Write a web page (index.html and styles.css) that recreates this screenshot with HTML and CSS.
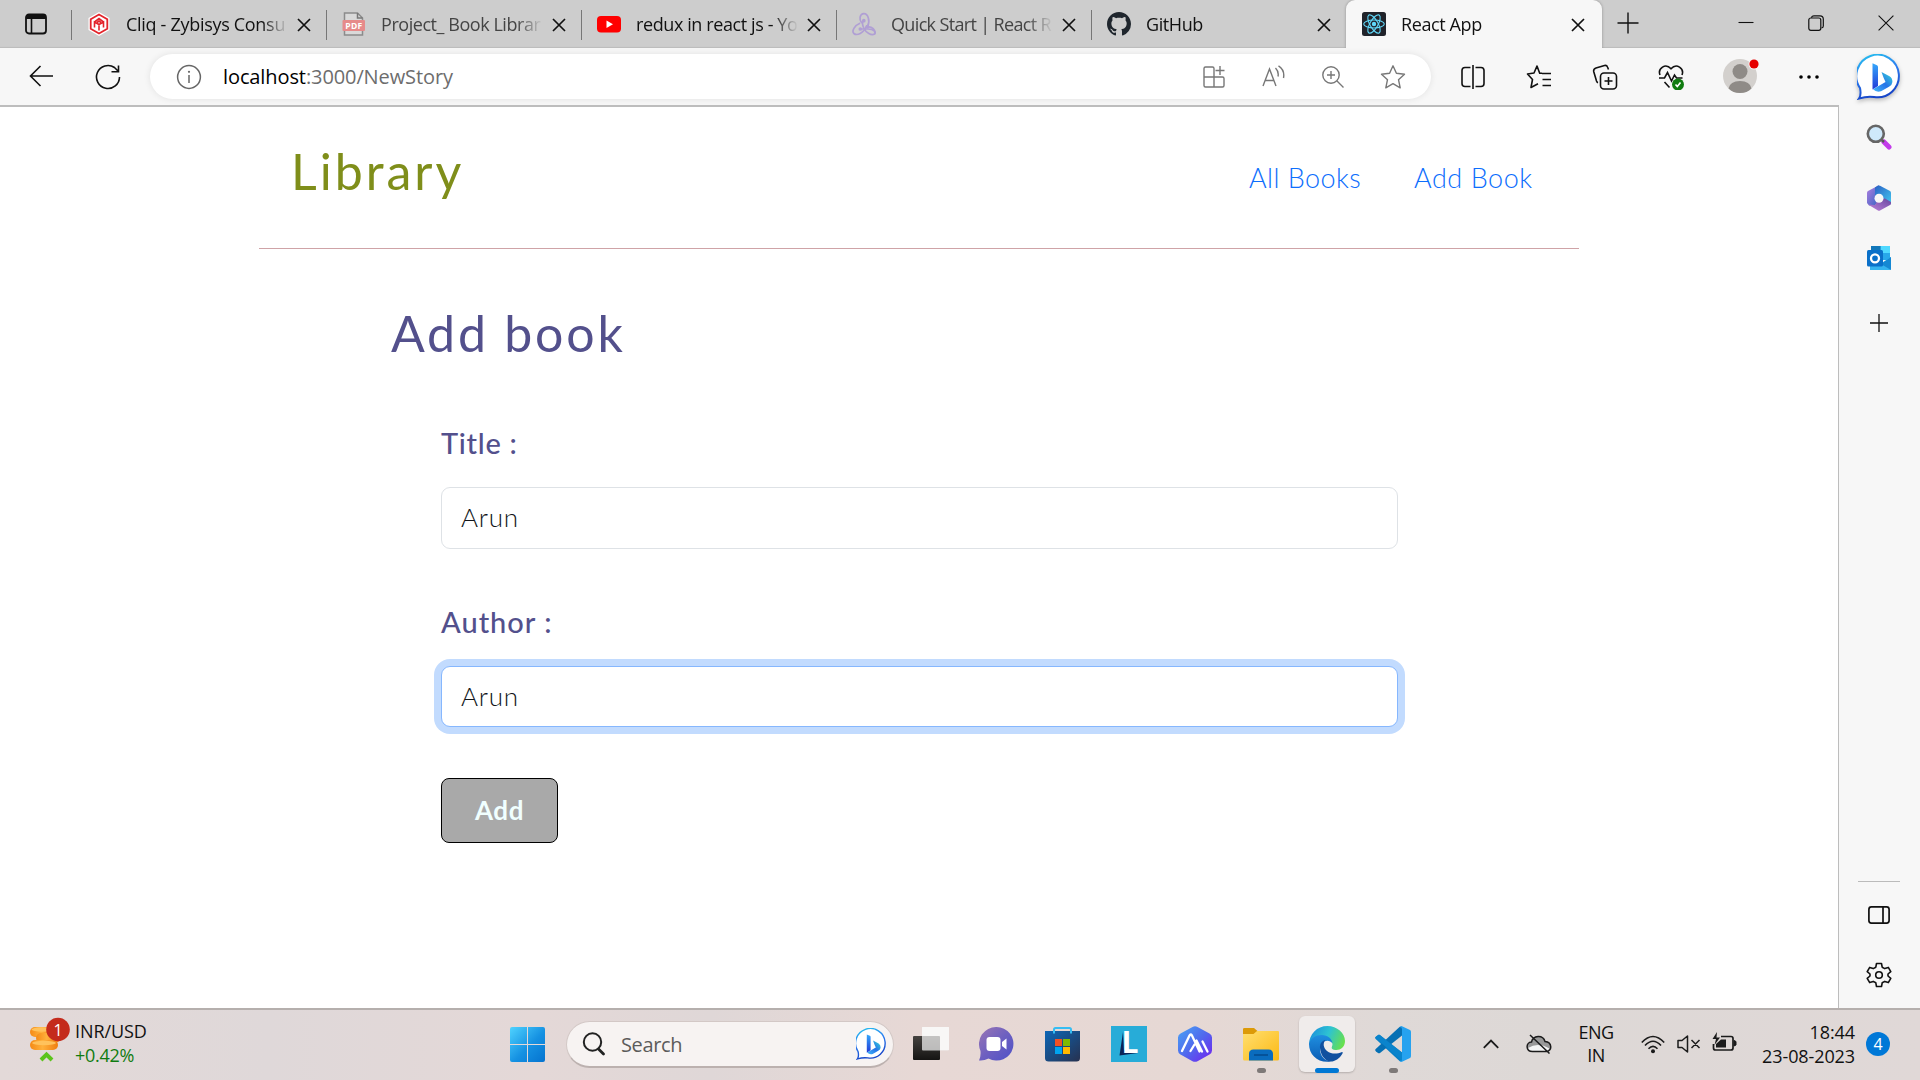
FILE: index.html
```html
<!DOCTYPE html>
<html lang="en">
<head>
<meta charset="utf-8">
<title>React App</title>
<link rel="stylesheet" href="styles.css">
</head>
<body>
<svg class="defs" width="0" height="0" aria-hidden="true">
  <defs>
    <linearGradient id="bingRing" x1="0" y1="0" x2="0.3" y2="1"><stop offset="0" stop-color="#26c6ee"/><stop offset=".5" stop-color="#2b7cf0"/><stop offset="1" stop-color="#1746c9"/></linearGradient>
    <linearGradient id="bingStem" x1="0" y1="0" x2="0" y2="1"><stop offset="0" stop-color="#35a8fb"/><stop offset="1" stop-color="#2139d8"/></linearGradient>
    <linearGradient id="bingBowl" x1="1" y1="0" x2="0" y2="1"><stop offset="0" stop-color="#35dcd8"/><stop offset=".5" stop-color="#2774e8"/><stop offset="1" stop-color="#41b8fb"/></linearGradient>
    <linearGradient id="winBlue" x1="0" y1="0" x2="1" y2="1"><stop offset="0" stop-color="#4fd3ff"/><stop offset=".55" stop-color="#1591e2"/><stop offset="1" stop-color="#0573cf"/></linearGradient>
    <linearGradient id="chatFill" x1="0" y1="0" x2="1" y2="1"><stop offset="0" stop-color="#9a76b4"/><stop offset=".5" stop-color="#6e60c0"/><stop offset="1" stop-color="#4d50c8"/></linearGradient>
    <linearGradient id="storeFill" x1="0" y1="0" x2="1" y2="1"><stop offset="0" stop-color="#0c66b6"/><stop offset="1" stop-color="#27314f"/></linearGradient>
    <linearGradient id="hexFill" x1="0" y1="0" x2="1" y2="1"><stop offset="0" stop-color="#4aa5f5"/><stop offset=".5" stop-color="#5069ed"/><stop offset="1" stop-color="#7420f0"/></linearGradient>
    <linearGradient id="folderFill" x1="0" y1="0" x2="1" y2="1"><stop offset="0" stop-color="#ffdf70"/><stop offset="1" stop-color="#fcb914"/></linearGradient>
    <linearGradient id="edgeTop" x1="0" y1=".3" x2="1" y2=".6"><stop offset="0" stop-color="#1a90dc"/><stop offset=".5" stop-color="#2ec3d2"/><stop offset="1" stop-color="#68e04c"/></linearGradient>
    <linearGradient id="edgeSide" x1="0" y1="0" x2="0" y2="1"><stop offset="0" stop-color="#1f8fe0"/><stop offset="1" stop-color="#0b5cb4"/></linearGradient>
    <linearGradient id="darkPane" x1="0" y1="0" x2="0" y2="1"><stop offset="0" stop-color="#45423f"/><stop offset="1" stop-color="#151413"/></linearGradient>
    <linearGradient id="coin" x1="0" y1="0" x2="1" y2="0"><stop offset="0" stop-color="#f58a16"/><stop offset=".45" stop-color="#ffb13c"/><stop offset="1" stop-color="#ef7d10"/></linearGradient>
    <linearGradient id="officeA" x1="0" y1="0" x2="1" y2="1"><stop offset="0" stop-color="#b37fe0"/><stop offset="1" stop-color="#3464c4"/></linearGradient>
    <linearGradient id="officeB" x1="0" y1="0" x2="1" y2="1"><stop offset="0" stop-color="#2a61c5"/><stop offset="1" stop-color="#43c5ee"/></linearGradient>
    <linearGradient id="officeC" x1="0" y1="1" x2="1" y2="0"><stop offset="0" stop-color="#bf82da"/><stop offset="1" stop-color="#66479f"/></linearGradient>
    <symbol id="close" viewBox="0 0 14 14"><path d="M1 1 13 13M13 1 1 13" stroke="#111" stroke-width="1.7" fill="none"/></symbol>
    <symbol id="bing" viewBox="0 0 46 46">
      <path d="M2 44.500Q4.500 41 3 34A21.300 21.300 0 1 1 17 43Q10 42 2 44.500Z" fill="#fff" stroke="url(#bingRing)" stroke-width="2"/>
      <path d="M15.500 9.200 20 11.300Q21 11.800 21 13V32L15.500 35.500Z" fill="url(#bingStem)"/>
      <path d="M24.500 18 32.500 22.200Q35.500 24 35.400 28 35.200 31 32 32.800L24 37.200Q19.500 38.800 16 35.200L28.500 28 26.500 23.600Z" fill="url(#bingBowl)"/>
    </symbol>
  </defs>
</svg>

<div class="screen">
  <header class="tabstrip">
    <div class="workspaces">
      <svg width="22" height="22" viewBox="0 0 22 22"><rect x="1" y="1.500" width="20" height="19" rx="3" fill="none" stroke="#111" stroke-width="1.800"/><path d="M1 6V4Q1 1 4 1H18Q21 1 21 4V6Z" fill="#111"/><path d="M6.500 6V20" stroke="#111" stroke-width="1.600"/></svg>
    </div>
    <div class="tab">
      <svg class="favicon" width="24" height="24" viewBox="0 0 24 24"><path d="M12 0 22.500 6V18L12 24 1.500 18V6Z" fill="#fff"/><path d="M12 2.500 20.300 7.200V16.800L12 21.500 3.700 16.800V7.200Z" fill="#fff" stroke="#e3242b" stroke-width="1.800"/><path d="M7.500 15.500V10L12 12.500 16.500 10V15.500M12 12.500V18.500M7.500 10 12 6.500 16.500 10M10 10.500 12 9 14 10.500" fill="none" stroke="#e3242b" stroke-width="1.600"/></svg>
      <span class="tab-title t-cliq">Cliq - Zybisys Consu</span>
      <svg class="tab-close" width="14" height="14"><use href="#close"/></svg>
    </div>
    <div class="tab">
      <svg class="favicon" width="24" height="24" viewBox="0 0 24 24"><path d="M2.500 1H15.500L20.500 6V23H2.500Z" fill="#d9d9d9" stroke="#8b8b8b" stroke-width="1.500"/><path d="M15.500 1V6H20.500" fill="none" stroke="#777" stroke-width="1.500"/><rect x=".5" y="8" width="22.500" height="11" rx="1" fill="#e68a8a"/><text x="11.700" y="16.800" font-size="8.500" font-weight="700" text-anchor="middle" fill="#fff" textLength="17">PDF</text></svg>
      <span class="tab-title t-pdf dim">Project_ Book Librar</span>
      <svg class="tab-close" width="14" height="14"><use href="#close"/></svg>
    </div>
    <div class="tab">
      <svg class="favicon" width="24" height="24" viewBox="0 0 24 24"><rect x="0" y="4" width="24" height="16.500" rx="4" fill="#f00"/><path d="M9.500 8.500V16L16 12.200Z" fill="#fff"/></svg>
      <span class="tab-title t-yt">redux in react js - Yo</span>
      <svg class="tab-close" width="14" height="14"><use href="#close"/></svg>
    </div>
    <div class="tab">
      <svg class="favicon" width="24" height="24" viewBox="0 0 24 24" fill="none" stroke="#b09fd4" stroke-width="1.700" stroke-linecap="round"><path d="M15.500 14.500C18.500 9 16 1.500 11.800 1.700 7.500 2 7 7.500 9.500 10.500"/><path d="M8.500 17H16C22 17 24.500 20.500 22.500 22 19.500 24 14 21 11.500 15.500 10 12 10.500 10 11.500 9"/><path d="M7.500 11.500C2.500 13.500-.5 19 1.800 21.500 5 24 11.500 21.500 14.500 14"/><path d="M15 15C20 14 24 18 22.500 22"/><circle cx="11.800" cy="8.700" r="1" fill="#b09fd4"/><circle cx="15.500" cy="14.700" r="1" fill="#b09fd4"/><circle cx="8.300" cy="17" r="1" fill="#b09fd4"/></svg>
      <span class="tab-title t-redux dim">Quick Start | React R</span>
      <svg class="tab-close" width="14" height="14"><use href="#close"/></svg>
    </div>
    <div class="tab">
      <svg class="favicon" width="24" height="24" viewBox="0 0 16 16"><path fill="#1f262d" d="M8 0C3.580 0 0 3.580 0 8c0 3.540 2.290 6.530 5.470 7.590.4.070.55-.17.55-.38 0-.19-.01-.82-.01-1.490-2.010.37-2.530-.49-2.690-.94-.09-.23-.48-.94-.82-1.130-.28-.15-.68-.52-.01-.53.63-.01 1.080.58 1.230.82.72 1.210 1.870.87 2.330.66.070-.52.28-.87.51-1.070-1.780-.2-3.640-.89-3.640-3.950 0-.87.31-1.590.82-2.150-.08-.2-.36-1.020.08-2.120 0 0 .67-.21 2.200.82.64-.18 1.320-.27 2-.27s1.360.09 2 .27c1.530-1.040 2.200-.82 2.200-.82.44 1.100.16 1.920.08 2.120.51.56.82 1.270.82 2.150 0 3.070-1.870 3.750-3.650 3.950.29.25.54.73.54 1.480 0 1.070-.01 1.930-.01 2.200 0 .21.15.46.55.38A8.010 8.010 0 0 0 16 8c0-4.420-3.580-8-8-8z"/></svg>
      <span class="tab-title">GitHub</span>
      <svg class="tab-close" width="14" height="14"><use href="#close"/></svg>
    </div>
    <div class="tab active">
      <svg class="favicon" width="24" height="24" viewBox="0 0 24 24"><rect width="24" height="24" rx="2.500" fill="#20232a"/><g fill="none" stroke="#61dafb" stroke-width="1.100"><ellipse cx="12" cy="12" rx="10.300" ry="4"/><ellipse cx="12" cy="12" rx="10.300" ry="4" transform="rotate(60 12 12)"/><ellipse cx="12" cy="12" rx="10.300" ry="4" transform="rotate(120 12 12)"/></g><circle cx="12" cy="12" r="2.200" fill="#61dafb"/></svg>
      <span class="tab-title">React App</span>
      <svg class="tab-close" width="14" height="14"><use href="#close"/></svg>
    </div>
    <svg class="new-tab" width="22" height="22" viewBox="0 0 22 22"><path d="M11 .5V21.500M.5 11H21.500" stroke="#111" stroke-width="1.400"/></svg>
    <div class="window-controls">
      <svg width="16" height="16" viewBox="0 0 16 16"><path d="M.5 7.500H15.500" stroke="#111" stroke-width="1.100"/></svg>
      <svg width="16" height="16" viewBox="0 0 16 16" fill="none" stroke="#111" stroke-width="1.200"><rect x=".8" y="3" width="12" height="12.300" rx="2"/><path d="M3.500 2.800Q3.700.8 6 .8H12Q15.300.8 15.300 4V11Q15.300 12.600 13.500 13"/></svg>
      <svg width="16" height="16" viewBox="0 0 16 16"><path d="M.6.6 15.400 15.400M15.400.6.6 15.400" stroke="#111" stroke-width="1.100"/></svg>
    </div>
  </header>

  <div class="browser">
    <div class="main-column">
      <nav class="toolbar">
        <svg class="back" width="24" height="22" viewBox="0 0 24 22" fill="none" stroke="#111" stroke-width="1.600"><path d="M24 11H1.500M11.500 1 1.500 11 11.500 21"/></svg>
        <svg class="reload" width="26" height="26" viewBox="0 0 26 26" fill="none" stroke="#111" stroke-width="1.600"><path d="M24.500 13A11.500 11.500 0 1 1 19.500 3.500L23.500 7.500M23.500 1.500V7.800H16.500"/></svg>
        <div class="address">
          <svg width="26" height="26" viewBox="0 0 26 26"><circle cx="13" cy="13" r="11.400" fill="none" stroke="#666" stroke-width="1.500"/><path d="M13 11V19" stroke="#666" stroke-width="1.500"/><circle cx="13" cy="7.800" r="1.100" fill="#666"/></svg>
          <span class="url"><b>localhost</b>:3000/NewStory</span>
          <div class="address-actions">
            <svg width="24" height="24" viewBox="0 0 24 24"><path d="M12 3.500Q12 2 10.500 2H3.500Q2 2 2 3.500V20.500Q2 22 3.500 22H20.500Q22 22 22 20.500V13.500Q22 12 20.500 12H2M12 3.500V22M18 1V10M13.500 5.500H22.500"/></svg>
            <svg width="24" height="24" viewBox="0 0 24 24"><path d="M1 21 7.500 4 14 21M3.500 15.500H11.500M13.500 3Q17 6.500 16 11.500M16.500 .8Q23 5 21.500 13"/></svg>
            <svg width="24" height="24" viewBox="0 0 24 24"><circle cx="10" cy="10" r="8.200"/><path d="M16 16 22.500 22.500M10 6V14M6 10H14"/></svg>
            <svg width="26" height="26" viewBox="0 0 26 26"><path d="M13 1.800 16.400 9.300 24.500 10.200 18.500 15.700 20.200 23.800 13 19.700 5.800 23.800 7.500 15.700 1.500 10.200 9.600 9.300Z" stroke-linejoin="round"/></svg>
          </div>
        </div>
        <div class="toolbar-actions">
          <svg width="26" height="26" viewBox="0 0 26 26"><path d="M10.500 3.500H5Q2 3.500 2 6.500V19.500Q2 22.500 5 22.500H10.500M15.500 3.500H21Q24 3.500 24 6.500V19.500Q24 22.500 21 22.500H15.500M13 1V25"/></svg>
          <svg width="26" height="26" viewBox="0 0 26 26"><path d="M16 9.200H13.700L11 2 8 9 1.500 10 6.500 15.500 5 23.500 12 19.800M16 9.500H25M16.500 15.500H25M16.500 21.500H25" stroke-linejoin="round"/></svg>
          <svg width="26" height="26" viewBox="0 0 26 26"><rect x="8.500" y="9" width="16" height="16" rx="3.500"/><path d="M16.500 13V21M12.500 17H20.500M16.500 5.500 15.500 3Q14.800 1 12.500 1.500L4 4Q1.200 5 1.700 7.500L4.500 17Q5 18.500 6 18.800"/></svg>
          <svg width="26" height="26" viewBox="0 0 26 26"><path d="M2 11C-.5 4.500 7.500-1.500 13 4.800 18.500-1.500 26.500 4.500 24 11M1 14H6.500L9.500 8.500 13.500 17 16.500 11 18.500 14H24.500M6.500 18 11.500 23.500"/><circle cx="20" cy="20.500" r="6" fill="#107c10" stroke="none"/><path d="M17.500 20.500 19.300 22.500 22.500 18.500" stroke="#fff"/></svg>
        </div>
        <svg class="profile" width="38" height="38" viewBox="0 0 38 38"><circle cx="17" cy="20" r="17" fill="#d3d0cd"/><circle cx="17" cy="15.500" r="7.500" fill="#8f8b87"/><path d="M5.500 32.500Q7 25 17 25T28.500 32.500Q24 37 17 37T5.500 32.500Z" fill="#8f8b87"/><circle cx="31" cy="8" r="5.500" fill="#f7f7f7"/><circle cx="31" cy="8" r="4.600" fill="#e60000"/></svg>
        <svg class="more" width="20" height="4" viewBox="0 0 20 4"><circle cx="2" cy="2" r="1.800"/><circle cx="10" cy="2" r="1.800"/><circle cx="18" cy="2" r="1.800"/></svg>
      </nav>

      <main class="page">
        <div class="site-header">
          <div class="brand">Library</div>
          <div class="site-nav"><a class="link-all">All Books</a><a class="link-add">Add Book</a></div>
        </div>
        <div class="content">
          <h1>Add book</h1>
          <form class="book-form">
            <label class="l-title">Title :</label>
            <input type="text" value="Arun">
            <label class="l-author">Author :</label>
            <input class="focused" type="text" value="Arun">
            <button type="button">Add</button>
          </form>
        </div>
      </main>
    </div>

    <aside class="sidebar">
      <svg class="side-bing" width="46" height="46"><use href="#bing"/></svg>
      <svg class="side-search" width="26" height="26" viewBox="0 0 26 26"><path d="M18 18 23 23" stroke="#c33bea" stroke-width="5" stroke-linecap="round"/><path d="M14 14.500 18 18" stroke="#555" stroke-width="2.500"/><circle cx="9.800" cy="9.800" r="8" fill="#cfe9fb" stroke="#666" stroke-width="2.600"/></svg>
      <svg class="side-office" width="26" height="26" viewBox="0 0 26 26"><path d="M13 .3 2 6Q1 6.700 1 8V18L3 20.500 9 21 13 13Z" fill="url(#officeA)"/><path d="M9 2.400 12 .6Q13 .2 14 .7L24 6Q25 6.600 25 8V18.500L13 13 9 11Z" fill="url(#officeB)"/><path d="M2 19.500 9 20 13 13 19 13.500 25 17V18.500Q25 19.500 24 20L14 25.500Q13 26 12 25.500Z" fill="url(#officeC)"/><circle cx="13" cy="13.200" r="4.500" fill="#f7f7f7"/></svg>
      <svg class="side-outlook" width="26" height="26" viewBox="0 0 26 26"><path d="M6 1H23Q24 1 24 2V15H5V2Q5 1 6 1Z" fill="#28a8ea"/><path d="M14.500 1H24V8H14.500Z" fill="#50d9ff"/><path d="M5 1H14.500V7H5Z" fill="#1278ba"/><path d="M4 25V15L14 19 25 12V24Q25 25 24 25Z" fill="#35b4ef"/><path d="M15 19 25 25V12Z" fill="#1588d3"/><rect x="1" y="5" width="16" height="16.500" rx="1.500" fill="#0a70c9"/><circle cx="9" cy="13.300" r="4" fill="none" stroke="#fff" stroke-width="2.300"/></svg>
      <svg class="side-plus" width="18" height="18" viewBox="0 0 18 18"><path d="M9 0V18M0 9H18" stroke="#111" stroke-width="1.300"/></svg>
      <div class="side-rule"></div>
      <svg class="side-panel" width="22" height="18" viewBox="0 0 22 18" fill="none" stroke="#111" stroke-width="1.700"><rect x=".9" y=".9" width="20.200" height="16.200" rx="2.500"/><path d="M15 1V17"/></svg>
      <svg class="side-gear" width="26" height="26" viewBox="0 0 26 26" fill="none" stroke="#111" stroke-width="1.600" stroke-linejoin="round"><path d="M10.500 1.500H15.500L16.200 5.200 18.800 6.600 22.300 5.400 24.800 9.700 22 12V14L24.800 16.300 22.300 20.600 18.800 19.400 16.200 20.800 15.500 24.500H10.500L9.800 20.800 7.200 19.400 3.700 20.600 1.200 16.300 4 14V12L1.200 9.700 3.700 5.400 7.200 6.600 9.800 5.200Z"/><circle cx="13" cy="13" r="3.300"/></svg>
    </aside>
  </div>

  <footer class="taskbar">
    <div class="widget">
      <svg width="41" height="48" viewBox="0 0 41 48"><rect x="0" y="12" width="25" height="10" rx="5" fill="url(#coin)"/><rect x="6" y="18" width="24" height="10" rx="5" fill="url(#coin)"/><rect x="0" y="25" width="28" height="10" rx="5" fill="url(#coin)"/><ellipse cx="12.500" cy="14.500" rx="11" ry="2.200" fill="#ffc25c"/><ellipse cx="14" cy="28" rx="12" ry="2.200" fill="#ffc25c"/><path d="M11 45 16.500 39.500 22 45" fill="none" stroke="#5cc41c" stroke-width="4"/><circle cx="28" cy="14.500" r="11.800" fill="#c42b1c"/><text x="28" y="20.500" font-size="16" text-anchor="middle" fill="#fff">1</text></svg>
      <div class="rate"><span class="pair">INR/USD</span><span class="change">+0.42%</span></div>
    </div>
    <svg class="start" width="35" height="35" viewBox="0 0 35 35"><path d="M2 0H17V17H0V2Q0 0 2 0ZM18 0H33Q35 0 35 2V17H18ZM0 18H17V35H2Q0 35 0 33ZM18 18H35V33Q35 35 33 35H18Z" fill="url(#winBlue)"/></svg>
    <div class="search">
      <svg width="24" height="24" viewBox="0 0 24 24" fill="none" stroke="#222" stroke-linecap="round"><circle cx="10.500" cy="10" r="8.700" stroke-width="2"/><path d="M16.500 17 21.500 22" stroke-width="2.800"/></svg>
      <span>Search</span>
      <svg class="search-bing" width="32" height="32"><use href="#bing"/></svg>
    </div>
    <div class="apps">
      <div class="app"><svg width="36" height="36" viewBox="0 0 36 36"><rect y="10" width="27" height="24" rx="1" fill="url(#darkPane)"/><rect x="9" y="1" width="27" height="23.500" rx="1" fill="#f5f5f5" opacity=".72"/><path d="M27 1H36V24H27ZM9 1H36V10H9Z" fill="#fafafa" opacity=".75"/></svg></div>
      <div class="app"><svg width="36" height="36" viewBox="0 0 36 36"><path d="M17.500 1A16.800 16.800 0 1 1 9.500 32.500Q5 35 0 34.500 2 31 1.500 25A17 17 0 0 1 17.500 1Z" fill="url(#chatFill)"/><rect x="7.500" y="11" width="14" height="14" rx="3" fill="#fff"/><path d="M23 16 27.500 12.500V23.500L23 20Z" fill="#fff"/></svg></div>
      <div class="app"><svg width="36" height="36" viewBox="0 0 36 36"><path d="M9 8V3.500Q9 2 10.500 2H24.500Q26 2 26 3.500V8" fill="none" stroke="#36bdf3" stroke-width="2"/><path d="M0 5H35V32Q35 35.500 31.500 35.500H3.500Q0 35.500 0 32Z" fill="url(#storeFill)"/><path d="M9 7.500V5M26 7.500V5" stroke="#36bdf3" stroke-width="2"/><path d="M10 13H17V20H10Z" fill="#f25022"/><path d="M18 13H25V20H18Z" fill="#7fba00"/><path d="M10 21H17V28H10Z" fill="#00a4ef"/><path d="M18 21H25V28H18Z" fill="#ffb900"/></svg></div>
      <div class="app"><svg width="36" height="36" viewBox="0 0 36 36"><rect width="36" height="36" fill="#27acd8"/><path d="M12 6 8.500 29.500 27 27 13 24Z" fill="#0b2457"/><text x="10.500" y="27" font-size="30" font-weight="700" fill="#fff">L</text></svg></div>
      <div class="app"><svg width="36" height="36" viewBox="0 0 36 36"><path d="M15.500 1Q18 -.5 20.500 1L32.500 7.500Q35 9 35 11.500V24.500Q35 27 32.500 28.500L20.500 35.200Q18 36.500 15.500 35.200L3.500 28.500Q1 27 1 24.500V11.500Q1 9 3.500 7.500Z" fill="url(#hexFill)"/><path d="M5 25 12.500 9.500Q13.500 7.500 15 9.500L22.500 25.500M13.500 25 17.500 18.500M19.500 14.500 25 25.500M25.500 15.500 30.500 25.500" fill="none" stroke="#fff" stroke-width="2.300" stroke-linecap="round"/></svg></div>
      <div class="app running"><svg width="36" height="36" viewBox="0 0 36 36"><path d="M0 3Q0 2 1.500 2H11L15 5.500 11 9H0Z" fill="#dc9a08"/><path d="M0 8H10.500L14 5H35Q36 5 36 6V33Q36 34.500 34.500 34.500H1.500Q0 34.500 0 33Z" fill="url(#folderFill)"/><path d="M6 34.500V28Q6 23.500 10.500 23.500H25.500Q30 23.500 30 28V34.500Z" fill="#0a6cbe"/><path d="M11 29H25" stroke="#054a8c" stroke-width="1.500"/></svg></div>
      <div class="app current"><svg width="36" height="36" viewBox="0 0 36 36"><path d="M0 19C0 8 8 0 18.500 0 28 0 36 7 36 15 36 21 31.500 24 27.500 24 23.500 24 22 22.500 23 20.500 25 16.500 21 13.500 17 13.500 11 13.500 4 14 0 19Z" fill="url(#edgeTop)"/><path d="M0 18C1.500 12 7 9 12.500 9 19 9 23 13 23.500 17.500 20 12 11 15 11 23 11 30 16 35 22 35.500 9 37.500 0 29 0 18Z" fill="url(#edgeSide)"/><path d="M11 22C10.500 18 13 14.500 16.500 14 13.500 17.500 14.500 22 18 25 22.500 28.500 28.500 28 32.500 26.200 33.500 25.800 34 26.500 33.500 27.500 30.500 33 25 36 21 35.500 15 34.500 11.500 28 11 22Z" fill="#11509f"/></svg></div>
      <div class="app running"><svg width="36" height="36" viewBox="0 0 36 36"><path d="M1 10.500 3 9Q4 8.300 5 9L27 26.500V35.500L24.500 35 .7 13Q-.4 11.700 1 10.500Z" fill="#087fc5"/><path d="M1 25.500 3 27Q4 27.700 5 27L27 9.500V.5L24.500 1 .7 23Q-.4 24.300 1 25.500Z" fill="#0670b4"/><path d="M27 .3 35 4Q36 4.500 36 6V30Q36 31.500 35 32L27 35.700Q25.500 36.200 24.500 35 27 35 27 33V3Q27 1 24.500 1 25.500-.2 27 .3Z" fill="#26a2ef"/><path d="M0 11.500 4 8.500 27 26.500V35Z" fill="#0a84cc"/></svg></div>
    </div>
    <div class="tray">
      <svg class="chevron" width="16" height="10" viewBox="0 0 16 10"><path d="M.8 8.800 8 1.500 15.200 8.800" fill="none" stroke="#1b1b1b" stroke-width="1.800"/></svg>
      <svg class="cloud" width="26" height="20" viewBox="0 0 26 20"><path d="M6.500 17.500C-.5 17.500-.5 8.500 5.500 8 7 1 17 .5 19 7.500 26.500 8 26.500 17.500 20 17.500Z" fill="#999"/><path d="M2 14Q12 8 23.500 14.500L21 17.500H5Z" fill="#f5f5f5"/><path d="M6.500 17.500C-.5 17.500-.5 8.500 5.500 8 7 1 17 .5 19 7.500 26.500 8 26.500 17.500 20 17.500ZM4 1 23.500 19.500" fill="none" stroke="#1b1b1b" stroke-width="1.500"/></svg>
      <div class="lang"><span>ENG</span><span>IN</span></div>
      <svg class="wifi" width="24" height="19" viewBox="0 0 24 19" fill="none" stroke="#1b1b1b" stroke-width="1.600"><path d="M.8 7.500Q12-4.500 23.200 7.500M4 10.500Q12 2 20 10.500M7.500 13.700Q12 9 16.500 13.700"/><circle cx="12" cy="16.300" r="2" fill="#1b1b1b" stroke="none"/></svg>
      <svg class="sound" width="24" height="18" viewBox="0 0 24 18" fill="none" stroke="#1b1b1b" stroke-width="1.500"><path d="M1 5.500H5L10.500 1V17L5 12.500H1ZM14.500 5 22.500 13M22.500 5 14.500 13" stroke-linejoin="round"/></svg>
      <svg class="battery" width="25" height="20" viewBox="0 0 25 20"><path d="M9 4.500H19Q21 4.500 21 6.500V16Q21 18 19 18H3.500Q1.500 18 1.500 16V12" fill="none" stroke="#1b1b1b" stroke-width="1.700"/><path d="M22 8.500 24 9.500V13L22 14Z" fill="#1b1b1b" stroke="#1b1b1b"/><path d="M9 7.500H14V15.500H4V12Z" fill="#1b1b1b"/><path d="M5 0 .5 7H4L2.500 13 8 5.500H4.500Z" fill="#1b1b1b"/></svg>
      <div class="clock"><span class="time">18:44</span><span class="date">23-08-2023</span></div>
      <div class="count">4</div>
    </div>
  </footer>
</div>
</body>
</html>
```
FILE: styles.css
```css
* { box-sizing: border-box; }
body { margin: 0; font-family: "Open Sans", "Noto Sans", sans-serif; color: #111; }
svg { display: block; flex: none; }
.defs { position: absolute; }
.screen { width: 1920px; height: 1080px; display: flex; flex-direction: column; overflow: hidden; background: #f7f7f7; }

/* Tab strip */
.tabstrip { height: 48px; flex: none; display: flex; background: #cdcdcd; box-shadow: inset 0 -2px 1px -1px #bcbcbc; }
.workspaces { width: 71px; padding: 13px 0 0 25px; }
.tab { width: 255px; display: flex; align-items: center; position: relative; padding: 0 15px 0 16px; }
.tab::before { content: ""; width: 1px; height: 30px; background: #777; position: absolute; left: 0; top: 10px; }
.tab.active { width: 256px; background: #f7f7f7; border-radius: 9px 9px 0 0; padding: 0 17px 0 16px; box-shadow: 0 0 3px rgba(0,0,0,.3); clip-path: inset(0 -4px 0 -4px); }
.tab.active::before { display: none; }
.favicon { margin-right: 15px; }
.tab-title { width: 162px; white-space: nowrap; font-size: 18px; line-height: 30px; letter-spacing: -.4px; -webkit-mask-image: linear-gradient(90deg, #000 84%, transparent); mask-image: linear-gradient(90deg, #000 84%, transparent); }
.t-cliq { letter-spacing: -.3px; }
.t-pdf { letter-spacing: -.45px; }
.t-yt { letter-spacing: -.4px; }
.t-redux { letter-spacing: -.65px; }
.dim { color: #444; }
.tab-close { margin-left: auto; margin-top: 2px; }
.new-tab { margin: 12px 0 0 15px; }
.window-controls { display: flex; gap: 54px; margin: 15px 0 0 99px; }

/* Browser frame */
.browser { flex: 1; display: flex; min-height: 0; }
.main-column { width: 1839px; display: flex; flex-direction: column; }
.toolbar { height: 57px; flex: none; display: flex; align-items: center; }
.back { margin-left: 29px; margin-top: -1px; }
.reload { margin-left: 42px; }
.address { margin-left: 29px; width: 1281px; height: 45px; border-radius: 23px; background: #fff; box-shadow: 0 0 7px rgba(0,0,0,.09); display: flex; align-items: center; padding: 0 25px 0 26px; }
.url { margin-left: 21px; font-size: 20px; letter-spacing: -.1px; color: #6d6d6d; white-space: nowrap; }
.url b { font-weight: 400; color: #000; }
.address-actions { margin-left: auto; display: flex; align-items: center; gap: 35px; }
.address-actions svg:nth-child(2) { margin-left: 1px; }
.address-actions svg { fill: none; stroke: #777; stroke-width: 1.4; }
.toolbar-actions { display: flex; gap: 40px; margin-left: 29px; }
.toolbar-actions svg { fill: none; stroke: #111; stroke-width: 1.6; }
.profile { margin: -4px 0 0 39px; }
.more { margin-left: 38px; }

/* Web page */
.page { flex: 1; background: #fff; border-top: 2px solid #bdbdbd; border-right: 1px solid #bdbdbd; font-family: Lato, "Open Sans", sans-serif; }
.site-header { width: 1320px; height: 142px; margin-left: 259px; padding: 34px 47px 0 32px; border-bottom: 1px solid #cfa3a7; display: flex; justify-content: space-between; align-items: flex-start; }
.brand { font-size: 50px; line-height: 60px; color: #7f8e1a; letter-spacing: 3px; }
.site-nav { display: flex; gap: 54px; margin-top: 22px; font-size: 27px; line-height: 30px; font-weight: 300; color: #0d6efd; }
.link-all { width: 111px; white-space: nowrap; letter-spacing: .45px; }
.link-add { width: 118px; white-space: nowrap; letter-spacing: .55px; }
.content { margin-left: 391px; padding-top: 54px; }
h1 { margin: 0; font-size: 50px; line-height: 60px; font-weight: 400; color: #53508c; letter-spacing: 2.8px; }
.book-form { width: 957px; margin: 62px 0 0 50px; display: flex; flex-direction: column; }
label { font-size: 29px; line-height: 36px; font-weight: 500; color: #53508c; margin-bottom: 26px; }
.l-title { letter-spacing: .7px; }
.l-author { letter-spacing: 1px; }
input { height: 62px; border: 1px solid #dee2e6; border-radius: 9px; padding: 0 20px 2px 19px; font: 300 26px/36px Lato, "Open Sans", sans-serif; letter-spacing: .8px; color: #111519; margin: 0 0 55px; outline: 0; }
.focused { height: 61px; border-color: #86b7fe; box-shadow: 0 0 0 7px #c2dbfe; margin-bottom: 51px; }
button { width: 117px; height: 65px; border: 1px solid #000; border-radius: 8px; background: #a9a9a9; color: azure; font: 700 26px Lato, "Open Sans", sans-serif; letter-spacing: .6px; padding: 0 0 2px; }

/* Edge sidebar */
.sidebar { width: 81px; display: flex; flex-direction: column; align-items: center; padding: 6px 1px 0 0; }
.side-bing { margin-left: 2px; filter: drop-shadow(0 2px 2px rgba(0,0,0,.25)); }
.side-search { margin-top: 24px; }
.side-office { margin-top: 35px; }
.side-outlook { margin-top: 34px; }
.side-plus { margin-top: 43px; }
.side-rule { width: 42px; height: 1px; background: #bbb; margin-top: 549px; }
.side-panel { margin-top: 24px; }
.side-gear { margin-top: 38px; }

/* Taskbar */
.taskbar { height: 72px; flex: none; display: flex; align-items: flex-start; border-top: 2px solid #b5afad; background: linear-gradient(90deg, #e3d9d8 0, #dfd8d9 14%, #e4d8d7 28%, #dfd7d7 37%, #e7d8d5 48%, #e6d8d4 62%, #dfd9d7 72%, #ddd8d6 80%, #e0d8d7 100%); }
.widget { width: 510px; display: flex; padding: 5px 0 0 30px; }
.rate { display: flex; flex-direction: column; font-size: 18px; line-height: 24px; padding: 4px 0 0 4px; }
.pair { letter-spacing: -.1px; }
.change { color: #107c10; letter-spacing: -.3px; }
.start { margin-top: 17px; }
.search { width: 328px; height: 47px; margin: 11px 0 0 21px; border-radius: 24px; background: #f7f3f2; border: 1px solid #d3c8c6; border-bottom: 2px solid #bcb1af; display: flex; align-items: center; padding: 0 5px 0 15px; }
.search span { margin-left: 15px; font-size: 20px; letter-spacing: -.35px; color: #5c5b5a; }
.search-bing { margin-left: auto; }
.apps { display: flex; margin-left: 4px; }
.app { width: 66px; height: 70px; display: flex; justify-content: center; padding-top: 16px; position: relative; }
.running::after, .current::after { content: ""; position: absolute; left: 28.5px; top: 58px; width: 9px; height: 5px; border-radius: 3px; background: #7e7978; }
.current::before { content: ""; position: absolute; left: 5px; top: 6px; width: 56px; height: 56px; border-radius: 6px; background: #f0eceb; box-shadow: 0 1px 2px rgba(0,0,0,.2); }
.current svg { position: relative; }
.current::after { left: 21px; width: 24px; background: #0078d4; }
.tray { display: flex; align-items: center; height: 68px; }
.chevron { margin-left: 57px; }
.cloud { margin-left: 27px; }
.lang { width: 36px; margin-left: 26px; display: flex; flex-direction: column; align-items: center; font-size: 18px; line-height: 23px; letter-spacing: -.5px; }
.wifi { margin-left: 27px; }
.sound { margin-left: 12px; }
.battery { margin: -4px 0 0 11px; }
.clock { width: 118px; display: flex; flex-direction: column; align-items: flex-end; font-size: 18px; line-height: 24px; letter-spacing: -.1px; }
.count { width: 24px; height: 24px; margin-left: 11px; border-radius: 50%; background: #0078d7; color: #fff; font-size: 16px; line-height: 24px; text-align: center; }
```
